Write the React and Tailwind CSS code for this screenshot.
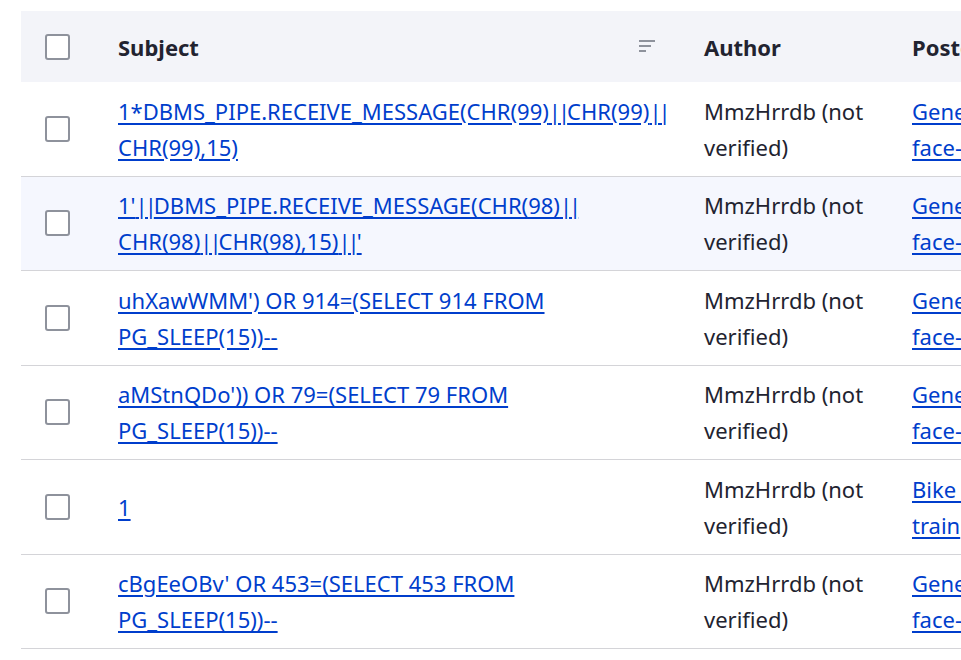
const rows = [
  {
    subject: ['1*DBMS_PIPE.RECEIVE_MESSAGE(CHR(99)||CHR(99)||', 'CHR(99),15)'],
    posted: ['General', 'face-to-face'],
  },
  {
    subject: ["1'||DBMS_PIPE.RECEIVE_MESSAGE(CHR(98)||", "CHR(98)||CHR(98),15)||'"],
    posted: ['General', 'face-to-face'],
    active: true,
  },
  {
    subject: ["uhXawWMM') OR 914=(SELECT 914 FROM", 'PG_SLEEP(15))--'],
    posted: ['General', 'face-to-face'],
  },
  {
    subject: ["aMStnQDo')) OR 79=(SELECT 79 FROM", 'PG_SLEEP(15))--'],
    posted: ['General', 'face-to-face'],
  },
  {
    subject: ['1'],
    posted: ['Bike and', 'train'],
  },
  {
    subject: ["cBgEeOBv' OR 453=(SELECT 453 FROM", 'PG_SLEEP(15))--'],
    posted: ['General', 'face-to-face'],
  },
];

function Checkbox() {
  return <span className="block w-[25px] h-[26px] rounded-[3px] border-2 border-[#8e929c] bg-white" />;
}

function SortIcon() {
  return (
    <svg width="17" height="13" viewBox="0 0 17 13" className="shrink-0">
      <rect x="0" y="0" width="16" height="2" fill="#8e929c" />
      <rect x="0" y="5" width="12" height="2" fill="#8e929c" />
      <rect x="0" y="10" width="7" height="2" fill="#8e929c" />
    </svg>
  );
}

// pipes in Noto Sans are wide, tighten them up a bit
function Line({ text }) {
  const parts = text.split('||');
  return parts.map((p, i) => (
    <span key={i}>
      {i > 0 && <span className="tracking-[-3px]">||</span>}
      {p}
    </span>
  ));
}

export default function App() {
  return (
    <div
      className="w-[961px] h-[660px] overflow-hidden bg-white pt-[11px] pl-[21px] text-[22px] leading-[36px] text-[#222330]"
      style={{ fontFamily: '"Noto Sans", "Open Sans", sans-serif' }}
    >
      <table className="border-collapse w-[1100px] table-fixed">
        <colgroup>
          <col className="w-[73px]" />
          <col className="w-[586px]" />
          <col className="w-[208px]" />
          <col />
        </colgroup>
        <thead>
          <tr className="bg-[#f3f4f9] h-[71px]">
            <th className="pl-[24px] align-middle">
              <Checkbox />
            </th>
            <th className="px-[24px] text-left font-bold">
              <div className="flex items-center justify-between">
                <span>Subject</span>
                <SortIcon />
              </div>
            </th>
            <th className="px-[24px] text-left font-bold">Author</th>
            <th className="px-[24px] text-left font-bold whitespace-nowrap">Posted in</th>
          </tr>
        </thead>
        <tbody>
          {rows.map((r, i) => (
            <tr key={i} className={`border-b border-[#d4d4d8] ${r.active ? 'bg-[#f5f7fe]' : ''}`}>
              <td className="pl-[24px] py-[10.75px] align-middle">
                <Checkbox />
              </td>
              <td className="px-[24px] py-[10.75px] align-middle">
                <a href="#" className="text-[#003ecc] underline underline-offset-[3px] whitespace-nowrap">
                  {r.subject.map((l, j) => (
                    <span key={j}>
                      {j > 0 && <br />}
                      <Line text={l} />
                    </span>
                  ))}
                </a>
              </td>
              <td className="px-[24px] py-[10.75px] align-middle whitespace-nowrap">
                MmzHrrdb (not
                <br />
                verified)
              </td>
              <td className="px-[24px] py-[10.75px] align-middle whitespace-nowrap">
                <a href="#" className="text-[#003ecc] underline underline-offset-[3px]">
                  {r.posted[0]}
                  <br />
                  {r.posted[1]}
                </a>
              </td>
            </tr>
          ))}
        </tbody>
      </table>
    </div>
  );
}
